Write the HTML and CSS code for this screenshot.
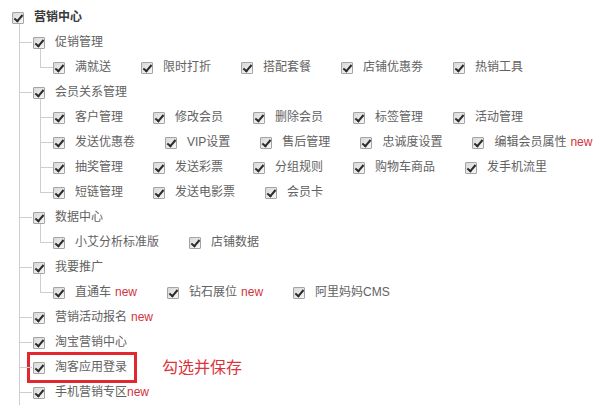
FILE: index.html
```html
<!DOCTYPE html>
<html lang="zh-CN">

<head>
    <meta charset="UTF-8">
    <title>权限设置</title>
    <link rel="stylesheet" href="styles.css">
</head>

<body>
    <ul class="tree">
        <li class="root">
            <div class="row"><label><input type="checkbox" checked>营销中心</label></div>
            <ul class="lv1">
                <li>
                    <div class="row"><label><input type="checkbox" checked>促销管理</label></div>
                    <ul class="lv2">
                        <li class="row">
                            <label><input type="checkbox" checked>满就送</label>
                            <label><input type="checkbox" checked>限时打折</label>
                            <label><input type="checkbox" checked>搭配套餐</label>
                            <label><input type="checkbox" checked>店铺优惠劵</label>
                            <label><input type="checkbox" checked>热销工具</label>
                        </li>
                    </ul>
                </li>
                <li>
                    <div class="row"><label><input type="checkbox" checked>会员关系管理</label></div>
                    <ul class="lv2">
                        <li class="row">
                            <label><input type="checkbox" checked>客户管理</label>
                            <label><input type="checkbox" checked>修改会员</label>
                            <label><input type="checkbox" checked>删除会员</label>
                            <label><input type="checkbox" checked>标签管理</label>
                            <label><input type="checkbox" checked>活动管理</label>
                        </li>
                        <li class="row">
                            <label><input type="checkbox" checked>发送优惠卷</label>
                            <label><input type="checkbox" checked>VIP设置</label>
                            <label><input type="checkbox" checked>售后管理</label>
                            <label><input type="checkbox" checked>忠诚度设置</label>
                            <label><input type="checkbox" checked>编辑会员属性<span class="new">new</span></label>
                        </li>
                        <li class="row">
                            <label><input type="checkbox" checked>抽奖管理</label>
                            <label><input type="checkbox" checked>发送彩票</label>
                            <label><input type="checkbox" checked>分组规则</label>
                            <label><input type="checkbox" checked>购物车商品</label>
                            <label><input type="checkbox" checked>发手机流里</label>
                        </li>
                        <li class="row">
                            <label><input type="checkbox" checked>短链管理</label>
                            <label><input type="checkbox" checked>发送电影票</label>
                            <label><input type="checkbox" checked>会员卡</label>
                        </li>
                    </ul>
                </li>
                <li>
                    <div class="row"><label><input type="checkbox" checked>数据中心</label></div>
                    <ul class="lv2">
                        <li class="row">
                            <label><input type="checkbox" checked>小艾分析标准版</label>
                            <label><input type="checkbox" checked>店铺数据</label>
                        </li>
                    </ul>
                </li>
                <li>
                    <div class="row"><label><input type="checkbox" checked>我要推广</label></div>
                    <ul class="lv2">
                        <li class="row">
                            <label><input type="checkbox" checked>直通车<span class="new">new</span></label>
                            <label><input type="checkbox" checked>钻石展位<span class="new">new</span></label>
                            <label><input type="checkbox" checked>阿里妈妈CMS</label>
                        </li>
                    </ul>
                </li>
                <li>
                    <div class="row"><label><input type="checkbox" checked>营销活动报名<span class="new">new</span></label></div>
                </li>
                <li>
                    <div class="row"><label><input type="checkbox" checked>淘宝营销中心</label></div>
                </li>
                <li>
                    <div class="row">
                        <label class="mark"><input type="checkbox" checked>淘客应用登录</label>
                        <span class="tip">勾选并保存</span>
                    </div>
                </li>
                <li>
                    <div class="row"><label><input type="checkbox" checked>手机营销专区<span class="new tight">new</span></label></div>
                </li>
            </ul>
        </li>
    </ul>
</body>

</html>
```

FILE: styles.css
```css
* {
    box-sizing: border-box;
}

html,
body {
    overflow: hidden;
}

body {
    margin: 0;
    padding: 5px 0 0 12px;
    font-family: "Liberation Sans", "Noto Sans CJK SC", sans-serif;
    font-size: 12px;
    line-height: 25px;
    color: #626262;
    background-color: #fff;
}

ul {
    list-style: none;
    margin: 0;
    padding: 0;
}

.row {
    display: flex;
    align-items: center;
    height: 25px;
    white-space: nowrap;
}

label {
    display: inline-flex;
    align-items: center;
    margin-right: 30px;
}

/* checkbox drawn by hand, old windows look */
input[type="checkbox"] {
    appearance: none;
    -webkit-appearance: none;
    position: relative;
    flex: none;
    width: 12px;
    height: 12px;
    margin: 0 10px 0 0;
    border: 1px solid #a4a4a4;
    border-radius: 1px;
    background: linear-gradient(135deg, #d8d8d8, #f7f7f7);
}

input[type="checkbox"]:checked::after {
    content: '';
    position: absolute;
    left: 3px;
    top: 0;
    width: 3px;
    height: 7px;
    border: solid #2b2b2b;
    border-width: 0 2px 2px 0;
    transform: rotate(40deg);
}

.root > .row label {
    font-weight: bold;
    color: #3a3a3a;
}

/* tree lines */
.lv1 {
    margin-left: 7px;
}

.lv1 > li {
    position: relative;
    padding-left: 14px;
}

.lv2 {
    margin-left: 7px;
}

.lv2 > li {
    position: relative;
    padding-left: 13px;
}

.lv1 > li::before,
.lv2 > li::before {
    content: '';
    position: absolute;
    left: 0;
    top: 12px;
    width: 13px;
    border-top: 1px solid #cecece;
}

.lv1 > li::after,
.lv2 > li::after {
    content: '';
    position: absolute;
    left: 0;
    top: -6px;
    bottom: 0;
    border-left: 1px solid #cecece;
}

.lv2 > li:last-child::after {
    bottom: auto;
    height: 19px;
}

.lv1 > li:last-child::after {
    bottom: -3px;
}

.new {
    color: #d2323c;
    margin-left: 4px;
}

.new.tight {
    margin-left: 0;
}

.mark {
    height: 19px;
    padding-right: 4px;
    margin-right: 0;
    outline: 3px solid #e4262e;
    outline-offset: 3px;
}

.tip {
    margin-left: 31px;
    font-size: 16px;
    color: #da343d;
}
```
